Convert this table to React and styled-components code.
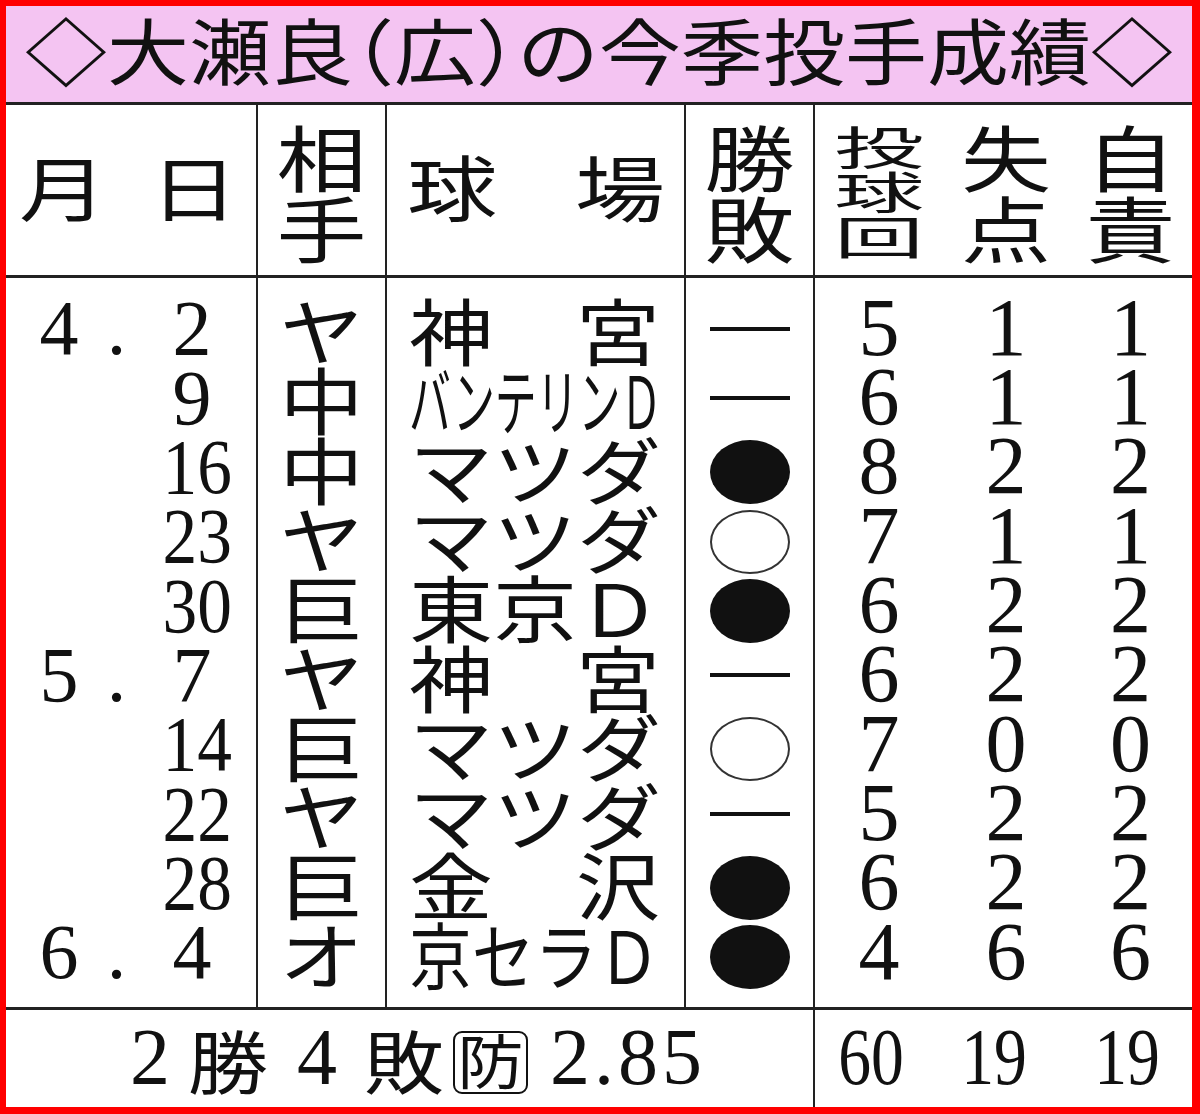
import React from 'react';
import styled, { createGlobalStyle } from 'styled-components';

const JP = `"Noto Sans CJK JP", "Noto Sans CJK SC", sans-serif`;
const NUM = `"Liberation Serif", "Noto Sans CJK JP", serif`;
const INK = '#111';
const RULE = '#222';
const ROW = 69.3;

const games = [
  { m: '4', d: '2', opp: 'ヤ', park: ['神', '宮'], res: 'draw', ip: '5', r: '1', er: '1' },
  { d: '9', opp: '中', park: 'バンテリンＤ', res: 'draw', ip: '6', r: '1', er: '1' },
  { d: '16', opp: '中', park: ['マ', 'ツ', 'ダ'], res: 'lose', ip: '8', r: '2', er: '2' },
  { d: '23', opp: 'ヤ', park: ['マ', 'ツ', 'ダ'], res: 'win', ip: '7', r: '1', er: '1' },
  { d: '30', opp: '巨', park: ['東', '京', 'Ｄ'], res: 'lose', ip: '6', r: '2', er: '2' },
  { m: '5', d: '7', opp: 'ヤ', park: ['神', '宮'], res: 'draw', ip: '6', r: '2', er: '2' },
  { d: '14', opp: '巨', park: ['マ', 'ツ', 'ダ'], res: 'win', ip: '7', r: '0', er: '0' },
  { d: '22', opp: 'ヤ', park: ['マ', 'ツ', 'ダ'], res: 'draw', ip: '5', r: '2', er: '2' },
  { d: '28', opp: '巨', park: ['金', '沢'], res: 'lose', ip: '6', r: '2', er: '2' },
  { m: '6', d: '4', opp: 'オ', park: '京セラＤ', res: 'lose', ip: '4', r: '6', er: '6' },
];

const GlobalStyle = createGlobalStyle`
  html, body {
    margin: 0;
    padding: 0;
    background: #fff;
  }
`;

const Frame = styled.div`
  box-sizing: border-box;
  width: 1200px;
  height: 1114px;
  border-style: solid;
  border-color: #ff0000;
  border-width: 6px 8px 7px 6px;
  display: flex;
  flex-direction: column;
  background: #fff;
  color: ${INK};
  overflow: hidden;
`;

const TitleBar = styled.h1`
  margin: 0;
  box-sizing: border-box;
  flex: none;
  height: 99px;
  padding-bottom: 3px;
  background: #f4c4f2;
  border-bottom: 3px solid ${RULE};
  display: flex;
  align-items: center;
  justify-content: center;
  font-weight: 400;
  font-feature-settings: 'halt' 1;
`;

const Table = styled.div`
  flex: 1;
  display: grid;
  grid-template-columns: 252px 129px 299px 129px 1fr;
  grid-template-rows: 173px 732px 1fr;
`;

// flattened newspaper type (平体)
const Flat = styled.span`
  display: inline-block;
  font-family: ${JP};
  font-size: ${(p) => p.$size}px;
  line-height: ${(p) => p.$lh || 0.8};
  white-space: nowrap;
  transform: translateY(-0.056em) scale(${(p) => p.$sx || 1}, ${(p) => p.$sy || 1});
  transform-origin: ${(p) => p.$origin || 'center'};
`;

const Stack = styled.span`
  display: flex;
  flex-direction: column;
  align-items: center;
  font-family: ${JP};
  font-size: 90px;
  line-height: ${(p) => p.$pitch}px;
  transform: scaleY(${(p) => p.$sy});
`;

const Num = styled.span`
  display: inline-block;
  font-family: ${NUM};
  font-size: ${(p) => p.$size || 78}px;
  letter-spacing: ${(p) => p.$track || 0}px;
  line-height: 0.8;
  white-space: nowrap;
  justify-self: ${(p) => p.$align || 'center'};
  transform: translateY(-0.07em) scaleX(${(p) => p.$sx || 1});
  transform-origin: ${(p) => (p.$align === 'end' ? 'right center' : 'center')};
`;

const HeadCell = styled.div`
  box-sizing: border-box;
  min-width: 0;
  border-right: ${(p) => (p.$last ? 'none' : `2px solid ${RULE}`)};
  border-bottom: 3px solid ${RULE};
  display: flex;
  align-items: center;
  justify-content: ${(p) => p.$justify || 'center'};
  padding: ${(p) => p.$pad || '0'};
`;

const StatGrid = styled.div`
  flex: none;
  width: 100%;
  height: ${(p) => (p.$h ? `${p.$h}px` : 'auto')};
  display: grid;
  grid-template-columns: ${(p) => p.$cols || '128px 126px 1fr'};
  align-items: center;
  justify-items: center;
`;

const BodyCol = styled.div`
  box-sizing: border-box;
  min-width: 0;
  border-right: ${(p) => (p.$last ? 'none' : `2px solid ${RULE}`)};
  border-bottom: 3px solid ${RULE};
  padding-top: 21px;
  display: flex;
  flex-direction: column;
`;

const Line = styled.div`
  flex: none;
  height: ${ROW}px;
  display: flex;
  align-items: center;
  justify-content: ${(p) => p.$justify || 'center'};
  padding: ${(p) => p.$pad || '0'};
`;

const DateLine = styled.div`
  flex: none;
  height: ${ROW}px;
  display: grid;
  grid-template-columns: 44px 71px 80px;
  align-items: center;
  padding-left: 31px;
`;

const Mark = styled.span`
  box-sizing: border-box;
  width: 80px;
  height: ${(p) => (p.$kind === 'draw' ? '4px' : '64px')};
  margin-bottom: ${(p) => (p.$kind === 'draw' ? '10px' : '0')};
  border-radius: ${(p) => (p.$kind === 'draw' ? '0' : '50%')};
  background: ${(p) => (p.$kind === 'win' ? 'transparent' : INK)};
  border: ${(p) => (p.$kind === 'win' ? '2px solid #333' : 'none')};
`;

const FootCell = styled.div`
  box-sizing: border-box;
  min-width: 0;
  grid-column: ${(p) => p.$span || 'auto'};
  border-right: ${(p) => (p.$last ? 'none' : `2px solid ${RULE}`)};
  display: flex;
  align-items: center;
  padding: ${(p) => p.$pad || '8px 0 0'};
`;

const Gap = styled.span`
  display: inline-block;
  width: ${(p) => p.$w}px;
  flex: none;
`;

const Boxed = styled.span`
  box-sizing: border-box;
  flex: none;
  width: 75px;
  height: 63px;
  border: 2px solid ${INK};
  border-radius: 9px;
  display: flex;
  align-items: center;
  justify-content: center;
`;

const Day = ({ d }) =>
  d.length > 1 ? (
    <Num $align="end" $sx={0.89}>{d}</Num>
  ) : (
    <Num>{d}</Num>
  );

const Venue = ({ park }) => {
  if (Array.isArray(park)) {
    return (
      <Line $justify="space-between" $pad="0 24px 0 22px">
        {park.map((c, i) => (
          <Flat key={i} $size={84} $sy={0.86}>{c}</Flat>
        ))}
      </Line>
    );
  }
  const sx = 251 / (park.length * 84);
  return (
    <Line $justify="flex-start" $pad="0 0 0 22px">
      <Flat $size={84} $sx={sx} $sy={0.86} $origin="left center">{park}</Flat>
    </Line>
  );
};

const App = () => (
  <>
    <GlobalStyle />
    <Frame>
      <TitleBar>
        <Flat $size={82} $sy={0.88} $lh={1}>◇大瀬良（広）の今季投手成績◇</Flat>
      </TitleBar>
      <Table>
        <HeadCell $justify="space-between" $pad="0 18px 0 13px">
          <Flat $size={88} $sy={0.8}>月</Flat>
          <Flat $size={88} $sy={0.8}>日</Flat>
        </HeadCell>
        <HeadCell>
          <Stack $pitch={87.5} $sy={0.8}>
            <span>相</span>
            <span>手</span>
          </Stack>
        </HeadCell>
        <HeadCell $justify="space-between" $pad="0 19px 0 20px">
          <Flat $size={90} $sy={0.8}>球</Flat>
          <Flat $size={90} $sy={0.8}>場</Flat>
        </HeadCell>
        <HeadCell>
          <Stack $pitch={87.5} $sy={0.8}>
            <span>勝</span>
            <span>敗</span>
          </Stack>
        </HeadCell>
        <HeadCell $last>
          <StatGrid>
            <Stack $pitch={90} $sy={0.5}>
              <span>投</span>
              <span>球</span>
              <span>回</span>
            </Stack>
            <Stack $pitch={87.5} $sy={0.8}>
              <span>失</span>
              <span>点</span>
            </Stack>
            <Stack $pitch={87.5} $sy={0.8}>
              <span>自</span>
              <span>責</span>
            </Stack>
          </StatGrid>
        </HeadCell>

        <BodyCol>
          {games.map((g, i) => (
            <DateLine key={i}>
              <Num>{g.m || ''}</Num>
              <Num>{g.m ? '.' : ''}</Num>
              <Day d={g.d} />
            </DateLine>
          ))}
        </BodyCol>
        <BodyCol>
          {games.map((g, i) => (
            <Line key={i}>
              <Flat $size={84} $sy={0.86}>{g.opp}</Flat>
            </Line>
          ))}
        </BodyCol>
        <BodyCol>
          {games.map((g, i) => (
            <Venue key={i} park={g.park} />
          ))}
        </BodyCol>
        <BodyCol>
          {games.map((g, i) => (
            <Line key={i}>
              <Mark $kind={g.res} />
            </Line>
          ))}
        </BodyCol>
        <BodyCol $last>
          {games.map((g, i) => (
            <StatGrid key={i} $h={ROW}>
              <Num $size={82}>{g.ip}</Num>
              <Num $size={82}>{g.r}</Num>
              <Num $size={82}>{g.er}</Num>
            </StatGrid>
          ))}
        </BodyCol>

        <FootCell $span="1 / 5" $pad="8px 0 0 124px">
          <Num $size={80}>2</Num>
          <Gap $w={18} />
          <Flat $size={80} $sy={0.86}>勝</Flat>
          <Gap $w={29} />
          <Num $size={80}>4</Num>
          <Gap $w={27} />
          <Flat $size={80} $sy={0.86}>敗</Flat>
          <Gap $w={9} />
          <Boxed>
            <Flat $size={66} $sy={0.9}>防</Flat>
          </Boxed>
          <Gap $w={22} />
          <Num $size={80} $track={4}>2.85</Num>
        </FootCell>
        <FootCell $last>
          <StatGrid $cols="112px 134px 1fr">
            <Num $size={80} $sx={0.82}>60</Num>
            <Num $size={80} $sx={0.82}>19</Num>
            <Num $size={80} $sx={0.82}>19</Num>
          </StatGrid>
        </FootCell>
      </Table>
    </Frame>
  </>
);

export default App;
